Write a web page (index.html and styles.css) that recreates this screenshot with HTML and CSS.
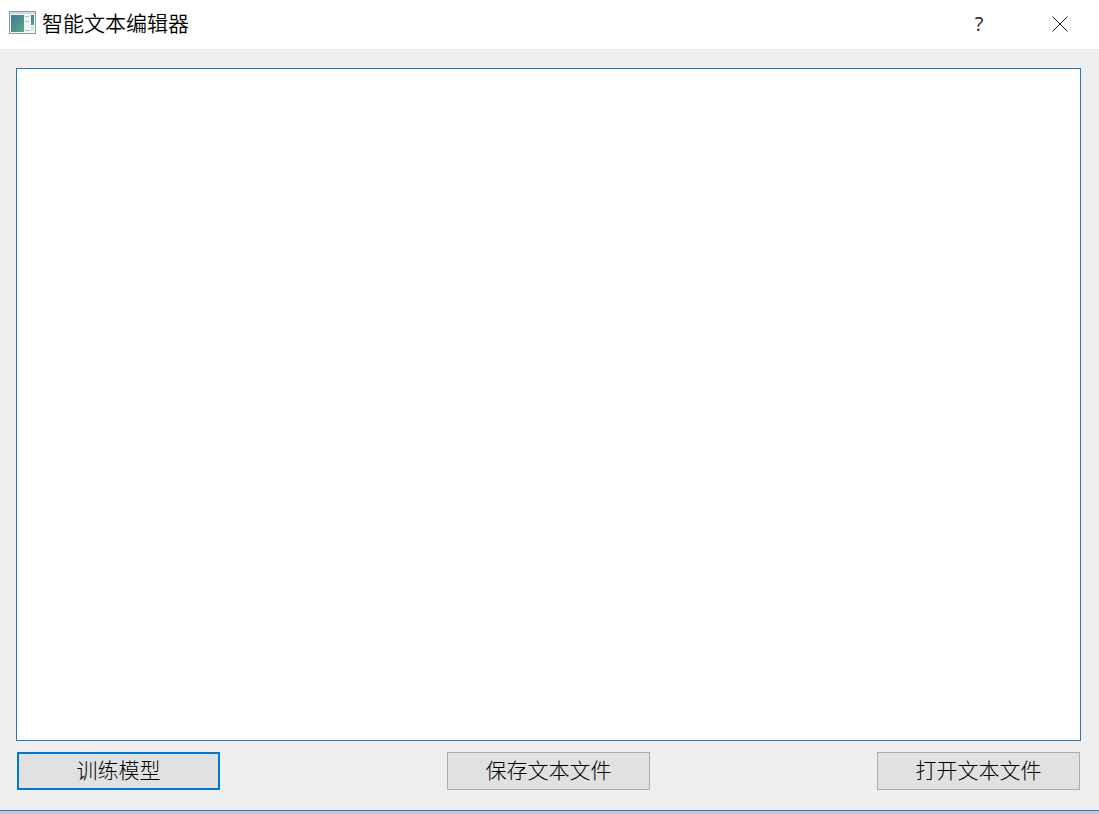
FILE: index.html
```html
<!DOCTYPE html>
<html lang="zh-CN">
<head>
<meta charset="utf-8">
<title>智能文本编辑器</title>
<link rel="stylesheet" href="styles.css">
</head>
<body>
<div class="window">
  <header class="titlebar">
    <svg class="app-icon" width="27" height="23" viewBox="0 0 27 23">
      <defs>
        <linearGradient id="pane" x1="0" y1="0" x2="1" y2="1">
          <stop offset="0" stop-color="#3f7a9c"/>
          <stop offset="1" stop-color="#5aa883"/>
        </linearGradient>
      </defs>
      <rect x=".5" y=".5" width="26" height="22" fill="#f1f5f6" stroke="#9099a3"/>
      <rect x="1" y="1" width="25" height="2" fill="#cfd9e1"/>
      <rect x="2" y="4" width="13" height="17" fill="url(#pane)"/>
      <path d="M16 5.5h4M16 10.5h4M16 19.5h5" stroke="#b3bfc8"/>
      <rect x="22" y="4" width="3" height="10" fill="url(#pane)"/>
      <rect x="22" y="15" width="3" height="5" fill="#dce3e6"/>
    </svg>
    <h1 class="title">智能文本编辑器</h1>
    <button class="control help" type="button">?</button>
    <button class="control close" type="button" aria-label="关闭">
      <svg width="16" height="16" viewBox="0 0 16 16"><path d="M.5.5l15 15M15.5.5l-15 15" stroke="#111"/></svg>
    </button>
  </header>
  <main class="content">
    <div class="editor" contenteditable="true"></div>
    <div class="actions">
      <button class="btn btn-default" type="button">训练模型</button>
      <button class="btn" type="button">保存文本文件</button>
      <button class="btn" type="button">打开文本文件</button>
    </div>
  </main>
</div>
</body>
</html>
```
FILE: styles.css
```css
* {
  box-sizing: border-box;
}

body {
  margin: 0;
  height: 814px;
  padding-bottom: 3px;
  overflow: hidden;
  background: #b9cbdc;
  font-family: "Noto Sans CJK SC", sans-serif;
}

.window {
  display: flex;
  flex-direction: column;
  height: 811px;
  background: #efefef;
  border-bottom: 1px solid #3d739f;
}

.titlebar {
  display: flex;
  align-items: flex-start;
  height: 49px;
  padding-left: 9px;
  background: #fff;
}

.app-icon {
  margin: 11px 6px 0 0;
}

.title {
  flex: 1;
  margin: 0;
  font-size: 21px;
  font-weight: 350;
  line-height: 44px;
  color: #000;
}

.control {
  display: flex;
  align-items: center;
  justify-content: center;
  width: 80px;
  height: 46px;
  padding: 0;
  border: 0;
  background: none;
}

.close {
  width: 80px;
  height: 48px;
  padding-left: 1px;
}

.help {
  height: 47px;
  font: 20px/47px "Open Sans", sans-serif;
  color: #222;
}

.content {
  display: flex;
  flex: 1;
  flex-direction: column;
  gap: 11px;
  padding: 19px 18px 20px 16px;
}

.editor {
  flex: 1;
  border: 1px solid #2878b8;
  background: #fff;
}

.actions {
  display: flex;
  justify-content: space-between;
  padding: 0 1px;
}

.btn {
  width: 203px;
  height: 38px;
  padding: 0 0 4px;
  border: 1px solid #adadad;
  background: #e1e1e1;
  color: #000;
  font: 300 21px/32px "Noto Sans CJK SC", sans-serif;
}

.btn-default {
  border: 2px solid #0078d7;
  line-height: 30px;
}
```
